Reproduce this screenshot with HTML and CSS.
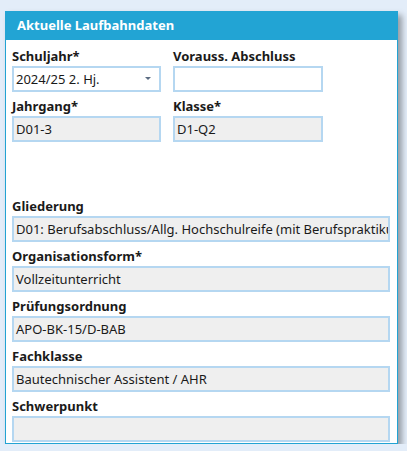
FILE: index.html
```html
<!DOCTYPE html>
<html>
<head>
<meta charset="utf-8">
<title>Laufbahndaten</title>
<link rel="stylesheet" href="styles.css">
</head>
<body>

<div class="panel">
	<div class="head">Aktuelle Laufbahndaten</div>
	<div class="body">
		<div class="pair">
			<div class="field">
				<label>Schuljahr*</label>
				<div class="input select">2024/25 2. Hj.<span class="arrow"></span></div>
			</div>
			<div class="field">
				<label>Vorauss. Abschluss</label>
				<div class="input"></div>
			</div>
			<div class="field">
				<label>Jahrgang*</label>
				<div class="input ro">D01-3</div>
			</div>
			<div class="field">
				<label>Klasse*</label>
				<div class="input ro">D1-Q2</div>
			</div>
		</div>
		<div class="spacer"></div>
		<div class="field">
			<label>Gliederung</label>
			<div class="input ro">D01: Berufsabschluss/Allg. Hochschulreife (mit Berufspraktikum)</div>
		</div>
		<div class="field">
			<label>Organisationsform*</label>
			<div class="input ro">Vollzeitunterricht</div>
		</div>
		<div class="field">
			<label>Prüfungsordnung</label>
			<div class="input ro">APO-BK-15/D-BAB</div>
		</div>
		<div class="field">
			<label>Fachklasse</label>
			<div class="input ro">Bautechnischer Assistent / AHR</div>
		</div>
		<div class="field">
			<label>Schwerpunkt</label>
			<div class="input ro"></div>
		</div>
	</div>
</div>

</body>
</html>
```

FILE: styles.css
```css
body {
	margin: 0;
	background-color: #e3edf9;
	font-family: "Noto Sans", "Open Sans", sans-serif;
	font-size: 13px;
	color: #1a1a1a;
}
.panel {
	margin: 11px 0 0 5px;
	width: 391px;
	border: 1px solid #22a3d3;
	background-color: #fff;
	box-shadow: 4px 4px 6px rgba(0, 0, 0, .35);
}
.panel .head {
	height: 29px;
	line-height: 28px;
	margin: -1px -1px 0 -1px;
	padding-left: 12px;
	background-color: #22a4d4;
	color: #fff;
	font-weight: bold;
}
.panel .body {
	padding: 6px 7px 1px 6px;
}
.pair {
	display: grid;
	grid-template-columns: 149px 150px;
	column-gap: 12px;
}
.spacer {
	height: 50px;
}
.field {
	height: 50px;
}
.field:last-child {
	height: auto;
}
.field label {
	display: block;
	height: 18px;
	line-height: 18px;
	padding-top: 1px;
	font-weight: bold;
	color: #1a1a1a;
}
.input {
	position: relative;
	box-sizing: border-box;
	height: 26px;
	margin-top: 1px;
	line-height: 22px;
	padding: 0 2px;
	border: 2px solid #b5d7f1;
	background-color: #fff;
	white-space: nowrap;
	overflow: hidden;
}
.input.ro {
	background-color: #efefef;
}
.select .arrow {
	position: absolute;
	right: 8px;
	top: 9px;
	border-left: 3px solid transparent;
	border-right: 3px solid transparent;
	border-top: 3px solid #5b6c82;
}
```
